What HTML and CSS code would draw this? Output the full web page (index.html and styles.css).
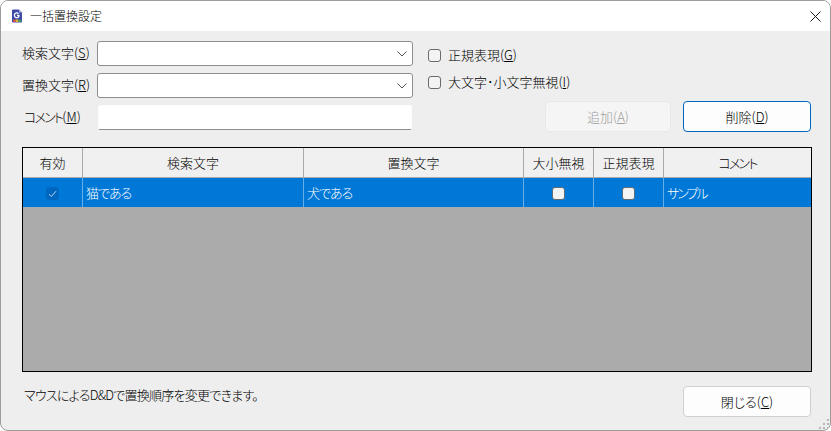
FILE: index.html
```html
<!DOCTYPE html>
<html lang="ja">
<head>
<meta charset="utf-8">
<title>一括置換設定</title>
<link rel="stylesheet" href="styles.css">
</head>
<body>
<div class="window">
  <header class="titlebar">
    <svg class="app-icon" width="12" height="14" viewBox="0 0 12 14">
      <path d="M1 1.5Q1 .5 2 .5H8L11 3.5V12.5Q11 13.5 10 13.5H2Q1 13.5 1 12.5Z" fill="#3f4aa8"/>
      <path d="M8 .5L11 3.5H8Z" fill="#aab0e0"/>
      <rect x="2" y="10.5" width="2.6" height="2.5" fill="#d9503f"/>
      <rect x="4.7" y="10.5" width="2.6" height="2.5" fill="#e0b030"/>
      <rect x="7.4" y="10.5" width="2.6" height="2.5" fill="#3fa060"/>
      <path d="M7.6 4.6A2.4 2.4 0 1 0 7.9 7.4V6.4H6" fill="none" stroke="#fff" stroke-width="1.3"/>
    </svg>
    <span class="title">一括置換設定</span>
    <svg class="close" width="11" height="11" viewBox="0 0 11 11"><path d="M.5.5L10.5 10.5M10.5.5L.5 10.5" stroke="#1a1a1a" stroke-width="1" fill="none"/></svg>
  </header>
  <main class="content">
    <section class="top">
      <div class="fields">
        <div class="field">
          <label class="field-label">検索文字(<u>S</u>)</label>
          <div class="combo"><svg width="10" height="6" viewBox="0 0 10 6"><path d="M.5.5L5 5L9.5.5" fill="none" stroke="#555" stroke-width="1"/></svg></div>
        </div>
        <div class="field">
          <label class="field-label">置換文字(<u>R</u>)</label>
          <div class="combo"><svg width="10" height="6" viewBox="0 0 10 6"><path d="M.5.5L5 5L9.5.5" fill="none" stroke="#555" stroke-width="1"/></svg></div>
        </div>
        <div class="field">
          <label class="field-label indent"><span class="tight">コメント</span>(<u>M</u>)</label>
          <input class="text-input" type="text">
        </div>
      </div>
      <div class="options">
        <label class="check"><input type="checkbox"><span>正規表現(<u>G</u>)</span></label>
        <label class="check"><input type="checkbox"><span>大文字･小文字無視(<u>I</u>)</span></label>
        <div class="actions">
          <button class="btn disabled" type="button">追加(<u>A</u>)</button>
          <button class="btn default" type="button">削除(<u>D</u>)</button>
        </div>
      </div>
    </section>
    <section class="grid-box">
      <table class="grid">
        <colgroup>
          <col class="c1"><col class="c2"><col class="c3"><col class="c4"><col class="c5"><col class="c6">
        </colgroup>
        <thead>
          <tr><th>有効</th><th>検索文字</th><th>置換文字</th><th>大小無視</th><th>正規表現</th><th><span class="tight">コメント</span></th></tr>
        </thead>
        <tbody>
          <tr>
            <td class="mid"><span class="cell-check on"><svg width="9" height="8" viewBox="0 0 9 8"><path d="M1 4.2L3.4 6.5L8 1.2" fill="none" stroke="#b9d6f0" stroke-width="1"/></svg></span></td>
            <td>猫である</td>
            <td>犬である</td>
            <td class="mid"><span class="cell-check"></span></td>
            <td class="mid"><span class="cell-check"></span></td>
            <td class="kana">サンプル</td>
          </tr>
        </tbody>
      </table>
    </section>
    <footer class="bottom">
      <p class="hint">マウスによるD&amp;Dで置換順序を変更できます。</p>
      <button class="btn" type="button">閉じる(<u>C</u>)</button>
    </footer>
  </main>
  <svg class="grip" width="11" height="11" viewBox="0 0 11 11" fill="#b5b5b5">
    <rect x="8" y="0" width="2" height="2"/>
    <rect x="4" y="4" width="2" height="2"/><rect x="8" y="4" width="2" height="2"/>
    <rect x="0" y="8" width="2" height="2"/><rect x="4" y="8" width="2" height="2"/><rect x="8" y="8" width="2" height="2"/>
  </svg>
</div>
</body>
</html>
```
FILE: styles.css
```css
* { box-sizing: border-box; }
html, body { margin: 0; height: 100%; background: #fff; }
body {
  font-family: "Noto Sans CJK JP", "Noto Sans", sans-serif;
  font-size: 13px;
  font-weight: 300;
  font-feature-settings: "palt";
  color: #000;
}
u { text-underline-offset: 1px; }
.tight { letter-spacing: -1.75px; }
.window {
  position: relative;
  width: 831px;
  height: 431px;
  display: flex;
  flex-direction: column;
  border: 1px solid #9c9c9c;
  border-radius: 8px;
  background: #eeeeee;
  overflow: hidden;
}
.titlebar {
  flex: none;
  height: 30px;
  display: flex;
  align-items: center;
  padding: 0 9px 0 10px;
  background: #fff;
}
.app-icon { flex: none; margin-right: 7px; }
.title { font-size: 12px; line-height: 16px; }
.close { margin-left: auto; }
.content {
  flex: 1;
  display: flex;
  flex-direction: column;
  padding: 10px 19px 13px 21px;
}
.top { display: flex; height: 106px; }
.fields {
  width: 391px;
  display: flex;
  flex-direction: column;
  gap: 7px;
}
.field { display: flex; align-items: center; height: 25px; }
.field-label { width: 75px; flex: none; line-height: 18px; white-space: nowrap; position: relative; top: -1px; }
.indent { padding-left: 2px; }
.combo {
  flex: 1;
  height: 25px;
  display: flex;
  align-items: center;
  justify-content: flex-end;
  padding-right: 5px;
  background: #fff;
  border: 1px solid #8d8d8d;
  border-radius: 3px;
}
.text-input {
  flex: none;
  width: 314px;
  height: 25px;
  margin-left: 1px;
  padding: 0 4px;
  background: #fff;
  border: 1px solid #fcfcfc;
  border-bottom-color: #8d8d8d;
  border-radius: 2px;
  outline: none;
}
.options {
  flex: 1;
  display: flex;
  flex-direction: column;
  padding: 5px 0 0 15px;
}
.check {
  display: flex;
  align-items: center;
  height: 18px;
  margin-bottom: 9px;
  line-height: 18px;
  white-space: nowrap;
}
.check input {
  appearance: none;
  flex: none;
  width: 13px;
  height: 13px;
  margin: 0 7px 0 0;
  background: #f3f3f3;
  border: 1px solid #6b6b6b;
  border-radius: 3px;
}
.actions {
  display: flex;
  gap: 12px;
  margin: 1px 0 0 117px;
}
.btn {
  width: 128px;
  height: 31px;
  padding: 0;
  font: inherit;
  color: #000;
  line-height: 18px;
  background: #fdfdfd;
  border: 1px solid #d0d0d0;
  border-radius: 4px;
}
.btn.disabled {
  width: 126px;
  color: #a0a0a0;
  background: #f5f5f5;
  border-color: #e8e8e8;
}
.btn.default { background: #fdfdfd; border-color: #0067c0; }
.grid-box {
  flex: none;
  width: 790px;
  height: 225px;
  background: #ababab;
  border: 1px solid #000;
}
.grid {
  width: 788px;
  table-layout: fixed;
  border-collapse: separate;
  border-spacing: 0;
}
.c1 { width: 60px; }
.c2 { width: 221px; }
.c3 { width: 220px; }
.c4, .c5 { width: 70px; }
.c6 { width: 147px; }
th {
  height: 30px;
  padding: 0;
  font-weight: 300;
  background: #f0f0f0;
  border-right: 1px solid #a9a9a9;
  border-bottom: 1px solid #a9a9a9;
}
td {
  height: 29px;
  padding: 0 3px;
  color: #fff;
  letter-spacing: -1px;
  line-height: 18px;
  background: #0078d7;
  border-right: 1px solid #66aee7;
  white-space: nowrap;
}
td.kana { letter-spacing: -2px; }
th:last-child, td:last-child { border-right: 0; }
td.mid { padding: 0; text-align: center; letter-spacing: 0; }
.cell-check {
  display: inline-block;
  width: 13px;
  height: 13px;
  vertical-align: middle;
  background: #f3f3f3;
  border: 1px solid #5f6b75;
  border-radius: 3px;
}
.cell-check.on {
  display: inline-flex;
  align-items: center;
  justify-content: center;
  background: #0067c0;
  border-color: #0067c0;
}
.bottom {
  flex: 1;
  display: flex;
  justify-content: space-between;
  padding-top: 14px;
}
.hint { margin: 0 0 0 2px; letter-spacing: -0.75px; line-height: 18px; }
.grip { position: absolute; right: 0; bottom: 0; }
```
